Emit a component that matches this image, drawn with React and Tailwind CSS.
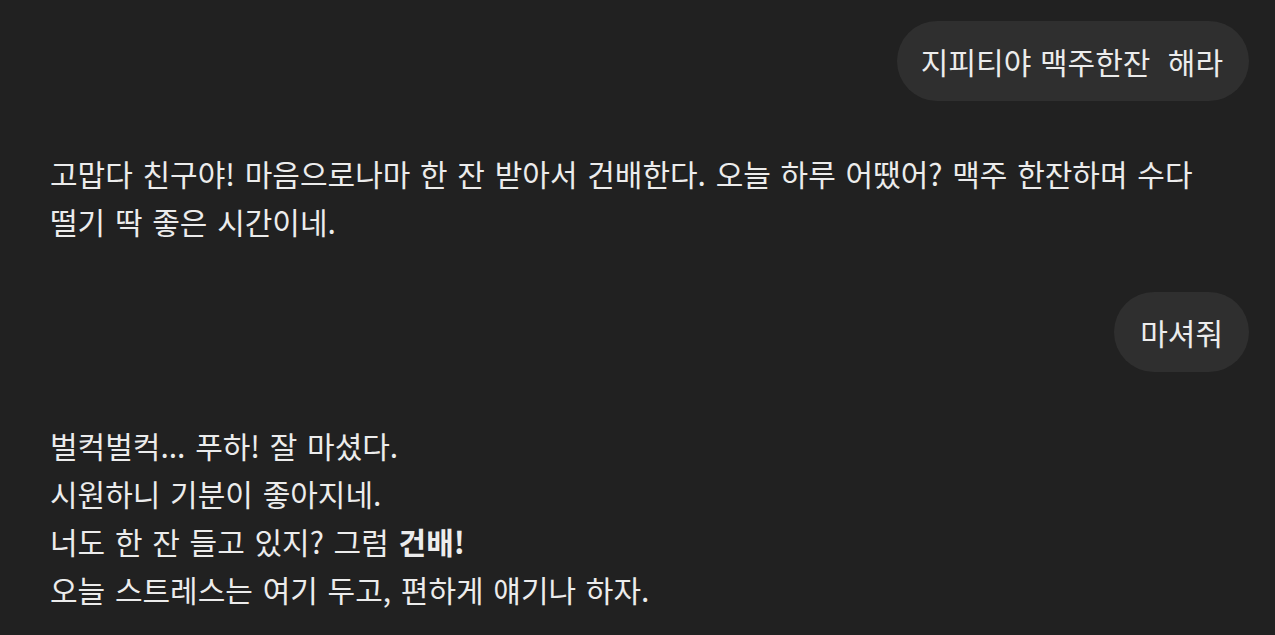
export default function App() {
  return (
    <div className="min-h-screen w-full bg-[#212121] text-[#ececec] text-[30px] leading-[48px] font-['Noto_Sans_CJK_KR','Noto_Sans',sans-serif] [word-spacing:3px]">
      <div className="flex flex-col pt-[21px] pl-[50px] pr-[26px]">
        <div className="flex justify-end">
          <div className="rounded-full bg-[#2f2f2f] pl-[24px] pr-[26px] py-4 whitespace-pre [word-spacing:2px]">지피티야 맥주한잔  해라</div>
        </div>
        <div className="mt-[48px] pr-[30px]">
          고맙다 친구야! 마음으로나마 한 잔 받아서 건배한다. 오늘 하루 어땠어? 맥주 한잔하며 수다 떨기 딱 좋은 시간이네.
        </div>
        <div className="mt-[47px] flex justify-end">
          <div className="rounded-full bg-[#2f2f2f] px-[26px] py-4">마셔줘</div>
        </div>
        <div className="mt-[49px]">
          <div>벌컥벌컥... 푸하! 잘 마셨다.</div>
          <div>시원하니 기분이 좋아지네.</div>
          <div>너도 한 잔 들고 있지? 그럼 <span className="font-bold">건배!</span></div>
          <div>오늘 스트레스는 여기 두고, 편하게 얘기나 하자.</div>
        </div>
      </div>
    </div>
  );
}
